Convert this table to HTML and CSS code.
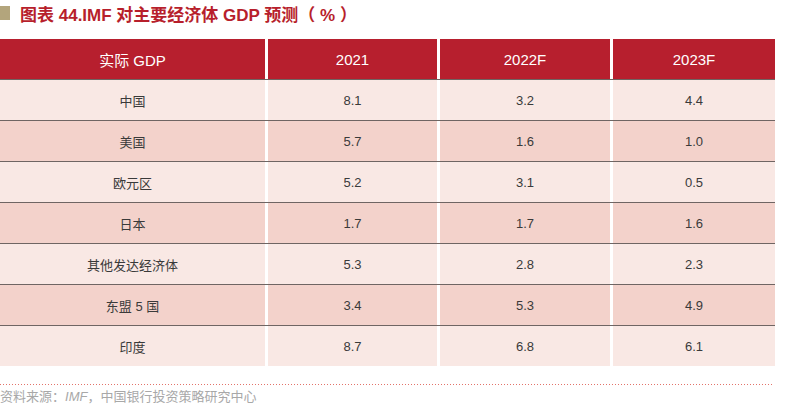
FILE: index.html
```html
<!DOCTYPE html>
<html lang="zh">
<head>
<meta charset="utf-8">
<link rel="stylesheet" href="styles.css">
</head>
<body>
<div class="page">
  <div class="title"><span class="mark"></span><span class="title-text">图表 44.IMF 对主要经济体 GDP 预测（ % ）</span></div>
  <div class="table">
    <div class="row head"><div class="cell">实际 GDP</div><div class="cell">2021</div><div class="cell">2022F</div><div class="cell">2023F</div></div>
    <div class="row light"><div class="cell">中国</div><div class="cell">8.1</div><div class="cell">3.2</div><div class="cell">4.4</div></div>
    <div class="row dark"><div class="cell">美国</div><div class="cell">5.7</div><div class="cell">1.6</div><div class="cell">1.0</div></div>
    <div class="row light"><div class="cell">欧元区</div><div class="cell">5.2</div><div class="cell">3.1</div><div class="cell">0.5</div></div>
    <div class="row dark"><div class="cell">日本</div><div class="cell">1.7</div><div class="cell">1.7</div><div class="cell">1.6</div></div>
    <div class="row light"><div class="cell">其他发达经济体</div><div class="cell">5.3</div><div class="cell">2.8</div><div class="cell">2.3</div></div>
    <div class="row dark"><div class="cell">东盟 5 国</div><div class="cell">3.4</div><div class="cell">5.3</div><div class="cell">4.9</div></div>
    <div class="row light last"><div class="cell">印度</div><div class="cell">8.7</div><div class="cell">6.8</div><div class="cell">6.1</div></div>
  </div>
  <div class="dots"></div>
  <div class="source">资料来源：<i>IMF</i>，中国银行投资策略研究中心</div>
</div>
</body>
</html>
```

FILE: styles.css
```css
html, body {
  margin: 0;
  padding: 0;
  background: #ffffff;
}
.page {
  width: 798px;
  height: 405px;
  overflow: hidden;
  font-family: "Liberation Sans", "Noto Sans CJK SC", sans-serif;
}
.title {
  display: flex;
  align-items: center;
  height: 26px;
  margin-bottom: 13px;
}
.mark {
  width: 10px;
  height: 14px;
  background: #b3a57c;
  margin-right: 10px;
}
.title-text {
  color: #b71f2c;
  font-size: 17px;
  font-weight: bold;
}
.table {
  width: 775px;
}
.row {
  display: grid;
  grid-template-columns: 265px 169px 170px 162px;
  column-gap: 3px;
  border-bottom: 1px solid #6f6563;
}
.row.last {
  border-bottom: none;
}
.cell {
  height: 40px;
  display: flex;
  align-items: center;
  justify-content: center;
  font-size: 13px;
  color: #3a3a3a;
}
.head .cell {
  background: #b71f2e;
  color: #ffffff;
  font-size: 15px;
}
.light .cell {
  background: #f9e8e4;
}
.dark .cell {
  background: #f3d2cb;
}
.dots {
  width: 774px;
  height: 1px;
  margin-top: 18px;
  background: repeating-linear-gradient(to right, #e3736a 0 1px, transparent 1px 3px);
}
.source {
  margin-top: 4px;
  font-size: 13px;
  color: #a8a8a8;
  line-height: 16px;
}
.source i {
  font-style: italic;
}
```
